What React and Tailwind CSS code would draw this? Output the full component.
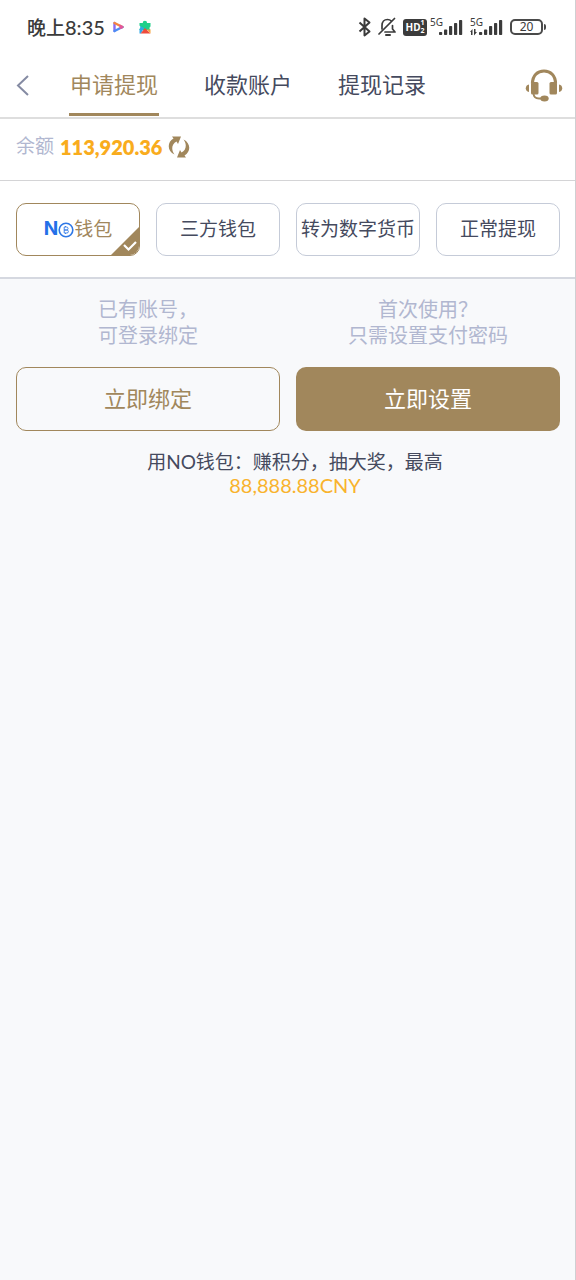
import React, { useState } from 'react';

const TABS = ['申请提现', '收款账户', '提现记录'];

const METHODS = [
  { id: 'no', label: '钱包' },
  { id: 'third', label: '三方钱包' },
  { id: 'crypto', label: '转为数字货币' },
  { id: 'normal', label: '正常提现' },
];

function PlayIcon() {
  return (
    <svg viewBox="0 0 14 14" className="w-3.5 h-3.5" fill="none" aria-hidden="true">
      <path d="M2.500 3v8" stroke="#8a6cf0" strokeWidth="2.400" strokeLinecap="round" />
      <path d="M2.500 3l8 4" stroke="#f5853f" strokeWidth="2.400" strokeLinecap="round" />
      <path d="M2.500 11l8-4" stroke="#4b8df5" strokeWidth="2.400" strokeLinecap="round" />
      <path d="M8 5.600L10.500 7 8.500 8" stroke="#e5559a" strokeWidth="2" strokeLinecap="round" strokeLinejoin="round" />
    </svg>
  );
}

function PuzzleIcon() {
  return (
    <svg viewBox="0 0 14 14" className="w-3.5 h-3.5" aria-hidden="true">
      <path d="M1.500 3h3.200a2.200 2.200 0 1 1 4.400 0h3.400v3.500a2 2 0 0 0 0 3.500H1.500V9a2 2 0 0 0 0-3.500z" fill="#1fd08a" />
      <path d="M1.500 9a2 2 0 0 0 0-3.500L6 8l-3 5.500H1.500z" fill="#2fa8e8" />
      <path d="M7 8l5.500 5.500h-10z" fill="#ee4b3c" />
      <path d="M9 9.500h3.500v4z" fill="#f6a53a" />
    </svg>
  );
}

function BluetoothIcon() {
  return (
    <svg viewBox="0 0 14 20" className="w-3.5 h-5" fill="none" stroke="#3b3b3b" strokeWidth="2" strokeLinejoin="round" aria-hidden="true">
      <path d="M1.500 5.500l10 9L6.500 18.500v-17L11.500 5.500l-10 9" />
    </svg>
  );
}

function BellOffIcon() {
  return (
    <svg viewBox="0 0 20 20" className="w-5 h-5" fill="none" stroke="#3b3b3b" strokeWidth="1.700" strokeLinecap="round" strokeLinejoin="round" aria-hidden="true">
      <path d="M4 12V8.500C4 5 6.300 2.500 9.500 2.500c1.500 0 2.800.5 3.800 1.500" />
      <path d="M14.500 8.500v3.500l2.500 3H7" />
      <path d="M16.500 1.500L1 17" />
      <path d="M8 18h4" strokeWidth="2" />
    </svg>
  );
}

function SignalIcon({ data }) {
  return (
    <svg viewBox="0 0 36 20" className="w-9 h-5 overflow-visible font-['Noto_Sans',sans-serif]" fill="#3b3b3b" aria-hidden="true">
      <text x="0" y="9" fontSize="10">5G</text>
      {data ? (
        <>
          <path d="M0 15l2.500-3v6H1v-3z" />
          <path d="M4 12h1.500v3H7l-3 3.500z" />
        </>
      ) : null}
      <rect x="9" y="15" width="3.200" height="3" rx="0.8" />
      <rect x="14" y="12.500" width="3.200" height="5.500" rx="0.8" />
      <rect x="19" y="9" width="3.200" height="9" rx="0.8" />
      <rect x="24" y="6" width="3.200" height="12" rx="0.8" />
      <rect x="29" y="3" width="3.200" height="15" rx="0.8" />
    </svg>
  );
}

function HeadsetIcon() {
  return (
    <svg viewBox="0 0 38 34" className="w-[38px] h-[34px]" fill="#a1875c" aria-hidden="true">
      <path d="M7.500 14.500C7.500 6.500 12.500 2 19 2s11.500 4.500 11.500 12.500" fill="none" stroke="#a1875c" strokeWidth="3.200" />
      <rect x="6" y="13" width="7.500" height="12.500" rx="1.500" />
      <rect x="24.500" y="13" width="7.500" height="12.500" rx="1.500" />
      <path d="M4 15.500v7.500C-.3 22.500 -.3 16 4 15.500z" />
      <path d="M34 15.500v7.500C38.300 22.500 38.300 16 34 15.500z" />
      <path d="M8.500 24c0 3.500 2 5.500 5.500 5.500h3" fill="none" stroke="#a1875c" strokeWidth="1.800" />
      <ellipse cx="19.500" cy="29.500" rx="4.200" ry="3" />
    </svg>
  );
}

function RefreshIcon() {
  return (
    <svg viewBox="0 0 22 22" className="w-[22px] h-[22px]" fill="#a1875c" aria-hidden="true">
      <path d="M6.500 18.500C-1 15 -1 6 5.500 2.500L4 .5 13 .5 10 8 8.500 5.500C3.500 8 3 14 6.500 18.500z" />
      <path d="M15.500 3.500C23 7 23 16 16.500 19.500L18 21.500 9 21.500 12 14 13.500 16.500C18.500 14 19 8 15.500 3.500z" />
    </svg>
  );
}

function StatusBar() {
  return (
    <div className="flex h-[54px] items-center justify-between pl-[27px] pr-[29px] text-[#3b3b3b]">
      <div className="flex items-center">
        <span className="text-[19px] font-medium">
          晚上<span className="text-[20px]">8:35</span>
        </span>
        <span className="ml-[7px] flex items-center gap-3">
          <PlayIcon />
          <PuzzleIcon />
        </span>
      </div>
      <div className="flex items-center">
        <BluetoothIcon />
        <span className="ml-1.5 mr-[5px]"><BellOffIcon /></span>
        <span className="flex h-[17px] w-6 items-center justify-center rounded-[3px] bg-[#3b3b3b] font-['Noto_Sans',sans-serif] text-[10px] font-bold text-white">
          HD
          <span className="grid text-[7px] leading-[8px]">
            <span>1</span>
            <span>2</span>
          </span>
        </span>
        <span className="ml-[3px] mr-1"><SignalIcon /></span>
        <SignalIcon data />
        <span className="ml-1 flex items-center gap-px">
          <span className="flex h-4 w-[33px] items-center justify-center rounded-[5px] border-2 border-[#4a4a4a] font-['Noto_Sans',sans-serif] text-xs leading-3">
            20
          </span>
          <span className="h-1.5 w-0.5 rounded-r-sm bg-[#4a4a4a]" />
        </span>
      </div>
    </div>
  );
}

function Header({ active, onChange }) {
  return (
    <header className="flex h-[65px] items-stretch border-b-2 border-[#dedede] pl-4 pr-3">
      <button type="button" aria-label="返回" className="flex w-[53px] items-center">
        <svg viewBox="0 0 14 22" className="w-3.5 h-[22px]" fill="none" stroke="#858ba3" strokeWidth="2" aria-hidden="true">
          <path d="M12 1L2 10.500 12 20" />
        </svg>
      </button>
      <nav className="flex flex-1 gap-11">
        {TABS.map((tab, i) => (
          <button
            key={tab}
            type="button"
            onClick={() => onChange(i)}
            className={
              i === active
                ? 'w-[90px] whitespace-nowrap border-b-[3px] border-[#a1875c] pt-0.5 text-[22px] text-[#a1875c] mb-px'
                : 'w-[90px] whitespace-nowrap border-b-[3px] border-transparent pt-0.5 text-[22px] text-[#454a5e] mb-px'
            }
          >
            {tab}
          </button>
        ))}
      </nav>
      <button type="button" aria-label="客服" className="flex items-center">
        <HeadsetIcon />
      </button>
    </header>
  );
}

function MethodButton({ method, selected, onSelect }) {
  return (
    <button
      type="button"
      onClick={onSelect}
      aria-pressed={selected}
      className={
        selected
          ? 'relative flex h-[53px] items-center justify-center overflow-hidden whitespace-nowrap rounded-[10px] border border-[#a1875c] text-[19px] text-[#a1875c]'
          : 'relative flex h-[53px] items-center justify-center overflow-hidden whitespace-nowrap rounded-[10px] border border-[#c5cbd8] text-[19px] text-[#454a5e]'
      }
    >
      {method.id === 'no' && (
        <>
          <span className="font-['Inter',sans-serif] font-bold text-[#2470e8]">N</span>
          <svg viewBox="0 0 16 16" className="w-4 h-4" aria-label="O">
            <circle cx="8" cy="8" r="6.800" fill="none" stroke="#2f78e6" strokeWidth="1.600" />
            <path d="M6.200 5h2.300a1.500 1.500 0 0 1 0 3H6.200zM6.200 8h2.700a1.500 1.500 0 0 1 0 3H6.200zM7.500 4v1M7.500 11v1" fill="none" stroke="#2f78e6" strokeWidth="0.900" />
          </svg>
        </>
      )}
      {method.label}
      {selected && (
        <svg viewBox="0 0 28 28" className="absolute bottom-0 right-0 w-7 h-7" aria-hidden="true">
          <path d="M28 0v28H0z" fill="#a1875c" />
          <path d="M13 18l4.500 4.500L25 15" fill="none" stroke="#fff" strokeWidth="2.200" />
        </svg>
      )}
    </button>
  );
}

export default function App() {
  const [tab, setTab] = useState(0);
  const [method, setMethod] = useState('no');

  return (
    <div className="min-h-screen border-r border-[#cfcfd2] bg-[#f8f9fb] font-['Lato','Noto_Sans_CJK_SC',sans-serif]">
      <div className="bg-white">
        <StatusBar />
        <Header active={tab} onChange={setTab} />

        <div className="flex h-[62px] items-center border-b border-[#d4d4d6] px-4 pb-1.5">
          <span className="text-[19px] text-[#b1b7d0]">余额</span>
          <span className="ml-1.5 text-xl font-extrabold text-[#f9ac1d]">113,920.36</span>
          <button type="button" aria-label="刷新" className="ml-1.5">
            <RefreshIcon />
          </button>
        </div>

        <div className="grid grid-cols-4 gap-4 border-b-2 border-[#d5d8e0] pb-[21px] pl-4 pr-[15px] pt-[22px]">
          {METHODS.map((m) => (
            <MethodButton key={m.id} method={m} selected={m.id === method} onSelect={() => setMethod(m.id)} />
          ))}
        </div>
      </div>

      <main className="pl-4 pr-[15px] pt-[17px]">
        <div className="grid grid-cols-2 gap-x-4 gap-y-[19px]">
          <p className="justify-self-center text-[20px] leading-[26px] text-[#b1b7d0]">
            已有账号，
            <br />
            可登录绑定
          </p>
          <p className="text-center text-[20px] leading-[26px] text-[#b1b7d0]">
            首次使用？
            <br />
            只需设置支付密码
          </p>
          <button type="button" className="h-16 rounded-[10px] border border-[#a1875c] pb-0.5 text-[22px] text-[#a1875c]">
            立即绑定
          </button>
          <button type="button" className="h-16 rounded-[10px] bg-[#a1875c] pb-0.5 text-[22px] text-white">
            立即设置
          </button>
        </div>

        <p className="mt-[19px] pl-3.5 text-center text-[19px] leading-6 text-[#454a5e]">
          用NO钱包：赚积分，抽大奖，最高
          <span className="block text-[20px] leading-[22px] text-[#f9b32d]">88,888.88CNY</span>
        </p>
      </main>
    </div>
  );
}
